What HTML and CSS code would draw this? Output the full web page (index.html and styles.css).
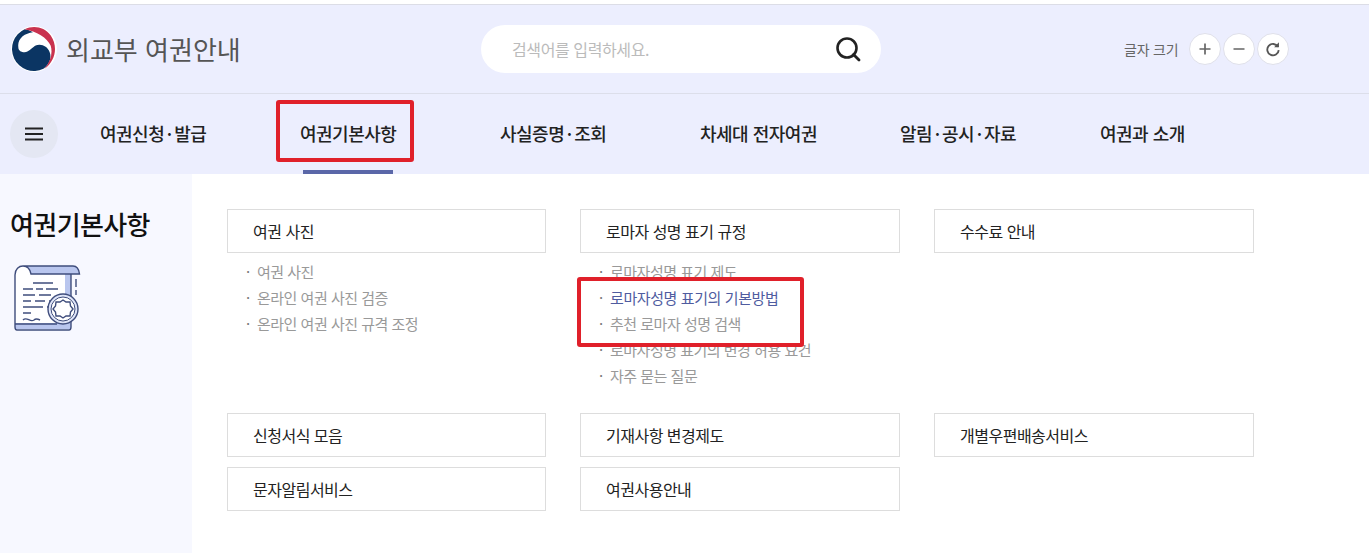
FILE: index.html
```html
<!DOCTYPE html>
<html lang="ko">
<head>
<meta charset="utf-8">
<title>외교부 여권안내</title>
<link rel="stylesheet" href="styles.css">
</head>
<body>
<div class="page">
  <header class="header">
    <div class="logo">
      <svg class="logo-mark" width="46" height="46" viewBox="1 1 44 44">
        <circle cx="23" cy="23" r="22" fill="#fff"/>
        <path d="M14 4A21 21 0 1 0 32 42C38 38 40 31 38 26C36 20 29 17 24 20C20 23 18 26 14 26C10 26 8 24 8 21C7 13 14 8 22 7C19 5 16 4 14 4Z" fill="#0b3563"/>
        <path d="M14 4C23 0 33 2 39 10C46 20 44 34 33 42C39 35 41 27 39 20C36 12 25 6 14 4Z" fill="#c9324f"/>
      </svg>
      <span class="logo-text">외교부 여권안내</span>
    </div>
    <div class="search">
      <span class="search-hint">검색어를 입력하세요.</span>
      <svg width="26" height="26" viewBox="0 0 26 26"><circle cx="12" cy="12" r="9.500" fill="none" stroke="#222" stroke-width="2.600"/><path d="M18.500 18.500L24 24" stroke="#222" stroke-width="2.800" stroke-linecap="round"/></svg>
    </div>
    <div class="fontsize">
      <span class="fontsize-label">글자 크기</span>
      <div class="fontsize-btns">
        <span class="round-btn"><svg width="12" height="12" viewBox="0 0 12 12"><path d="M6 .5V11.500M.5 6H11.500" stroke="#666" stroke-width="1.700"/></svg></span>
        <span class="round-btn"><svg width="12" height="12" viewBox="0 0 12 12"><path d="M.5 6H11.500" stroke="#777" stroke-width="1.700"/></svg></span>
        <span class="round-btn"><svg width="16" height="16" viewBox="0 0 14 14"><path d="M11.300 5A5 5 0 1 0 12 8" fill="none" stroke="#555" stroke-width="1.600"/><path d="M8 5.400H12.200V1.200Z" fill="#555"/></svg></span>
      </div>
    </div>
  </header>
  <nav class="nav">
    <span class="menu-btn"><svg width="20" height="14" viewBox="0 0 20 14"><path d="M1 1.500H19M1 7H19M1 12.500H19" stroke="#222" stroke-width="1.800"/></svg></span>
    <ul class="nav-list">
      <li class="nav-item">여권신청<span class="dot">·</span>발급</li>
      <li class="nav-item is-active">여권기본사항</li>
      <li class="nav-item">사실증명<span class="dot">·</span>조회</li>
      <li class="nav-item">차세대 전자여권</li>
      <li class="nav-item">알림<span class="dot">·</span>공시<span class="dot">·</span>자료</li>
      <li class="nav-item">여권과 소개</li>
    </ul>
  </nav>
  <main class="main">
    <aside class="side">
      <h2 class="side-title">여권기본사항</h2>
      <svg class="side-icon" width="68" height="68" viewBox="0 0 68 68">
        <path d="M2 64V10C2 4 6 1 10 1H60C64 1 66 5 66.500 9H58V64Z" fill="#fff"/>
        <path d="M12 1H60C64 1 66 5 66.500 9H18C17 5 15 2 12 1Z" fill="#b9c6ee"/>
        <path d="M52 9H58V40H52Z" fill="#b9c6ee"/>
        <path d="M2 58H58V64H2Z" fill="#b9c6ee"/>
        <path d="M2 62V10C2 4 6 1 10 1H60C64 1 66 5 66.500 9H18C17 4 14 1 10 1M2 62C2 64 3 65 4 65H56C57.500 65 58 64 58 62V56M58 9V32M63 14V22M63 25V30M2 59H44" fill="none" stroke="#3f4d7c" stroke-width="1.400"/>
        <path d="M20 18H40M10 24H20M23 24H30M33 24H45M10 30H22M26 30H38M10 36H18M22 36H32M36 36H40M10 42H30M34 42H37M10 48H18" fill="none" stroke="#3f4d7c" stroke-width="1.400"/>
        <path d="M10 55C14 51 17 58 21 55C23 53 25 54 27 55" fill="none" stroke="#3f4d7c" stroke-width="1.400"/>
        <circle cx="50" cy="44" r="15" fill="#dfe5f8" stroke="#3f4d7c" stroke-width="1.400"/>
        <circle cx="50" cy="44" r="12" fill="#fff" stroke="#3f4d7c" stroke-width="1"/>
        <path d="M50 35L53 37L57 37L57.500 41L60 44L57.500 47L57 51L53 51L50 53L47 51L43 51L42.500 47L40 44L42.500 41L43 37L47 37Z" fill="#fff" stroke="#3f4d7c" stroke-width="1.400"/>
      </svg>
    </aside>
    <section class="content">
      <div class="group">
        <div class="card">여권 사진</div>
        <ul class="sublist">
          <li class="subitem">여권 사진</li>
          <li class="subitem">온라인 여권 사진 검증</li>
          <li class="subitem">온라인 여권 사진 규격 조정</li>
        </ul>
      </div>
      <div class="group">
        <div class="card">로마자 성명 표기 규정</div>
        <ul class="sublist">
          <li class="subitem">로마자성명 표기 제도</li>
          <li class="subitem is-current">로마자성명 표기의 기본방법</li>
          <li class="subitem">추천 로마자 성명 검색</li>
          <li class="subitem">로마자성명 표기의 변경 허용 요건</li>
          <li class="subitem">자주 묻는 질문</li>
        </ul>
      </div>
      <div class="group">
        <div class="card">수수료 안내</div>
      </div>
      <div class="card">신청서식 모음</div>
      <div class="card">기재사항 변경제도</div>
      <div class="card">개별우편배송서비스</div>
      <div class="card">문자알림서비스</div>
      <div class="card">여권사용안내</div>
    </section>
  </main>
  <div class="mark mark-nav"></div>
  <div class="mark mark-list"></div>
</div>
</body>
</html>
```
FILE: styles.css
```css
* { box-sizing: border-box; }
html, body { margin: 0; padding: 0; }
body {
  background: #fff;
  font-family: "Noto Sans CJK KR", "Noto Sans", sans-serif;
  color: #222;
}
ul { list-style: none; margin: 0; padding: 0; }

.page {
  position: relative;
  height: 553px;
  overflow: hidden;
  padding-top: 4px;
  display: flex;
  flex-direction: column;
}

.header {
  height: 90px;
  display: flex;
  align-items: center;
  padding-left: 11px;
  background: #eceefe;
  border-top: 1px solid #dcdde6;
  border-bottom: 1px solid #dcdeea;
}
.logo {
  width: 470px;
  display: flex;
  align-items: center;
  gap: 9px;
}
.logo-mark { flex: none; }
.logo-text {
  font-size: 26px;
  line-height: 36px;
  color: #555;
}
.search {
  width: 400px;
  height: 48px;
  flex: none;
  display: flex;
  align-items: center;
  justify-content: space-between;
  padding: 0 20px 0 31px;
  background: #fff;
  border-radius: 24px;
}
.search-hint {
  font-size: 16px;
  letter-spacing: -0.4px;
  color: #bbb;
}
.fontsize {
  margin-left: 243px;
  display: flex;
  align-items: center;
  gap: 11px;
}
.fontsize-label {
  font-size: 14px;
  letter-spacing: -0.2px;
  color: #666;
}
.fontsize-btns { display: flex; gap: 2px; }
.round-btn {
  width: 32px;
  height: 32px;
  display: flex;
  align-items: center;
  justify-content: center;
  background: #fff;
  border: 1px solid #dfe0ea;
  border-radius: 50%;
}

.nav {
  height: 80px;
  display: flex;
  align-items: center;
  padding-left: 10px;
  background: #eceefe;
}
.menu-btn {
  width: 48px;
  height: 48px;
  flex: none;
  display: flex;
  align-items: center;
  justify-content: center;
  background: #e4e7f3;
  border-radius: 50%;
}
.nav-list {
  display: flex;
  align-self: stretch;
  margin-left: 42px;
}
.nav-item {
  position: relative;
  width: 200px;
  display: flex;
  align-items: center;
  padding-bottom: 2px;
  font-size: 18px;
  font-weight: 500;
  letter-spacing: -0.5px;
  color: #222;
  white-space: pre;
}
.dot { margin: 0 2.500px; }
.nav-item.is-active::after {
  content: "";
  position: absolute;
  left: 3px;
  bottom: 0;
  width: 90px;
  height: 4px;
  background: #5a67a8;
}

.main { flex: 1; display: flex; }
.side {
  width: 192px;
  flex: none;
  padding: 32px 0 0 10px;
  background: #f7f8ff;
}
.side-title {
  margin: 0 0 23px;
  font-size: 26px;
  line-height: 36px;
  font-weight: 500;
  letter-spacing: -0.6px;
  color: #111;
}
.side-icon { display: block; margin-left: 3px; }

.content {
  flex: 1;
  padding: 35px 0 0 35px;
  display: grid;
  grid-template-columns: 319px 320px 320px;
  grid-auto-rows: min-content;
  column-gap: 34px;
  row-gap: 10px;
  align-content: start;
}
.card {
  height: 44px;
  display: flex;
  align-items: center;
  padding-left: 25px;
  border: 1px solid #ddd;
  background: #fff;
  font-size: 16px;
  letter-spacing: -0.5px;
  color: #222;
}
.sublist { padding: 6px 0 14px 19px; }
.subitem {
  position: relative;
  height: 26px;
  padding-left: 11px;
  font-size: 15px;
  line-height: 26px;
  letter-spacing: -0.5px;
  color: #999;
}
.subitem::before {
  content: "·";
  position: absolute;
  left: 0;
  top: 0;
  color: #777;
}
.subitem.is-current { color: #4f5c9f; letter-spacing: -0.4px; }

.mark {
  position: absolute;
  border: 4px solid #e0202a;
  border-radius: 3px;
}
.mark-nav { left: 276px; top: 100px; width: 138px; height: 62px; }
.mark-list { left: 577px; top: 277px; width: 227px; height: 70px; }
```
